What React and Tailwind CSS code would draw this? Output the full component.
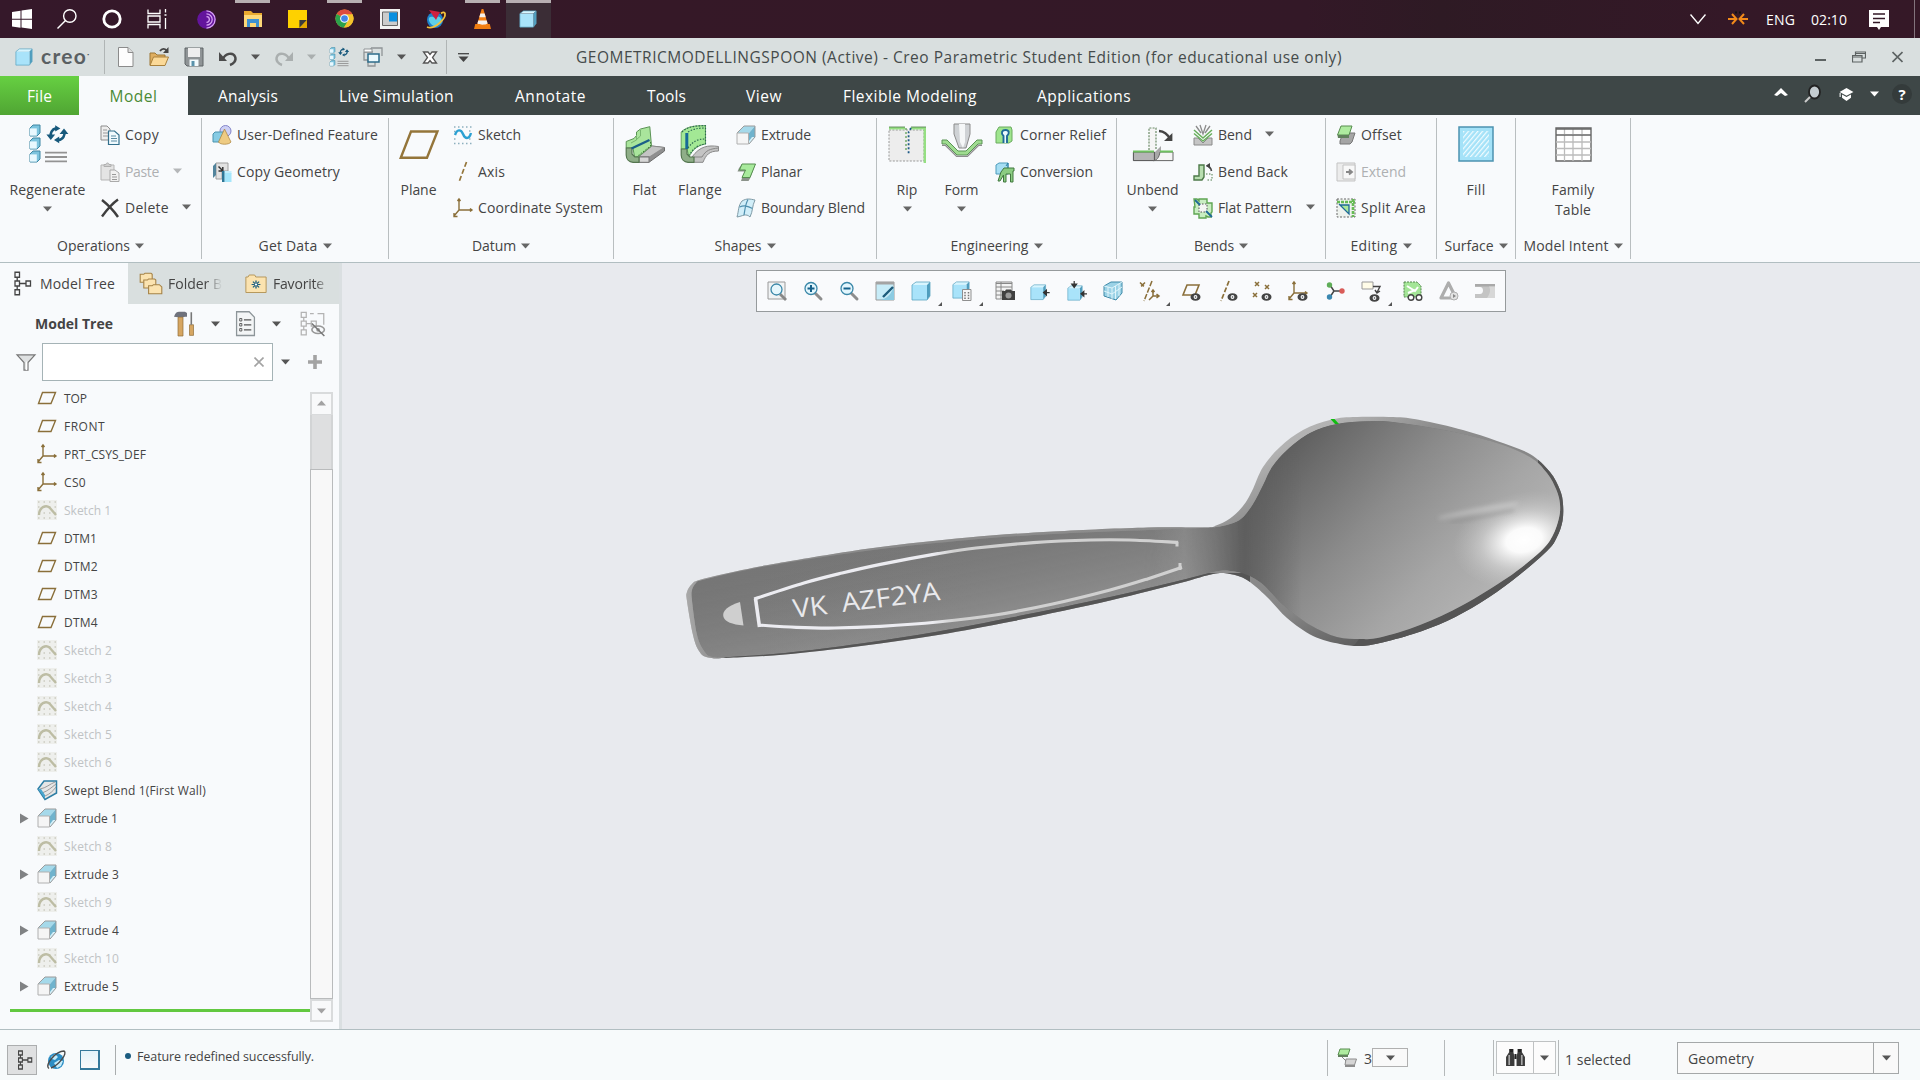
import React, { useLayoutEffect, useRef, useState } from "react";

/* Text run whose tracking is tuned so that it occupies exactly `w` pixels. */
function T({ w, c = "", children }) {
  const ref = useRef(null);
  const [ls, setLs] = useState(0);
  useLayoutEffect(() => {
    const natural = ref.current.getBoundingClientRect().width;
    setLs((w - natural) / String(children).length);
  }, [w, children]);
  return (
    <span ref={ref} style={{ letterSpacing: ls }} className={"inline-block shrink-0 whitespace-pre " + c}>
      {children}
    </span>
  );
}

function Tri({ c = "text-[#555]", up }) {
  return (
    <svg className={"h-[6px] w-[9px] shrink-0 " + c} viewBox="0 0 9 6" fill="currentColor">
      {up ? <path d="M0 5.5 4.5 0.5 9 5.5z" /> : <path d="M0 0.5h9L4.5 5.5z" />}
    </svg>
  );
}

const CUBE = (
  <g>
    <path d="M1 4 5 1h14l-3 3z" fill="#d9f5fe" />
    <path d="M16 4 19 1v14l-3 4z" fill="#4f9dbd" />
    <path d="M1 4h15v15H1z" fill="#a9e3fa" />
    <path d="M1 4 5 1h14v14l-3 4H1z" fill="none" stroke="#5ba5c2" strokeWidth="0.8" />
  </g>
);
const EYE = (
  <g>
    <ellipse cx="14.5" cy="16" rx="5" ry="3.8" fill="#444" />
    <circle cx="14.5" cy="16" r="1.9" fill="#f8fafc" />
    <circle cx="14.5" cy="16" r="0.8" fill="#444" />
  </g>
);
const MINI = (y) => (
  <g>
    <path d={`M1 ${y + 1.5}l1.5-1.5h3.5v4l-1.500 1.500H1z`} fill="#7cc4de" stroke="#3d86a3" strokeWidth=".5" />
    <path d={`M1 ${y + 1.7}h3.4v3.6H1z`} fill="#e8f8fe" />
  </g>
);
const AXES = <path d="M6 1v11h13M6 12l-5 6M4.5 3 6 1l1.500 2M17 10.500l2 1.500-2 1.500M1 15v3.500h3.500" fill="none" stroke="#8a6f3a" strokeWidth="1.400" />;
const LENS = (
  <g>
    <path d="M12.500 12.500l5.500 5.500" stroke="#8d8d8d" strokeWidth="3" strokeLinecap="round" />
    <circle cx="8" cy="7.500" r="6" fill="#e3f6fd" stroke="#3a87a8" strokeWidth="1.300" />
  </g>
);
const REGEN = (
  <g>
    {MINI(0.5)}
    {MINI(7)}
    {MINI(13.5)}
    <path d="M8.500 14.300h11M8.500 16.500h11M8.500 18.700h11" stroke="#939393" strokeWidth=".9" />
    <path d="M11.500 6.500A3.300 3.300 0 0 1 14 2.200M18 3.500A3.300 3.300 0 0 1 15.300 8" stroke="#17597c" strokeWidth="1.300" fill="none" />
    <path d="M9.200 5.300h4.400L11.400 8z M15.800 5h4.400L18 2.300z" fill="#17597c" />
    <path d="M13.600.6v3.200l2.600-1.600zM15.600 6.300v3.300L13 8z" fill="#17597c" />
  </g>
);
const EXTR = (
  <g>
    <path d="M1 8 8 1h11l-6 7z" fill="#a5d9ea" />
    <path d="M13 8l6-7v11l-6 7z" fill="#6fb3cd" />
    <path d="M13 19l6-7-3 0-3 4z" fill="#d4eff8" />
    <path d="M1 8 8 1h11v11l-6 7" fill="none" stroke="#9b9b9b" />
    <path d="M1 8h11.500v11H1z" fill="#f5f5f5" stroke="#b0b0b0" />
  </g>
);
const TREE = (
  <g fill="none" stroke="currentColor" strokeWidth="1.300">
    <path d="M3 1h4.500v4H3zM3 8h4.500v4H3zM3 15h4.500v4H3zM14 8h4.500v4H14zM5.200 5v3M5.200 12v3M7.500 10H14" />
  </g>
);

const ICONS = {
  cube: CUBE,
  extrude: EXTR,
  regen: REGEN,
  win: <path d="M0 3 8.500 1.700v8H0zM9.500 1.500 20 0v9.700H9.500zM0 10.700h8.500v8L0 17.500zM9.500 10.700H20V20L9.500 18.600z" fill="#fff" />,
  search: <g fill="none" stroke="#fff" strokeWidth="1.400"><circle cx="12.800" cy="7" r="6.200" /><path d="M8.500 11.500.5 19.500" /></g>,
  cortana: <circle cx="10" cy="10" r="8.200" fill="none" stroke="#fff" strokeWidth="2.800" />,
  task: <path d="M1 .5V4.500h12V.5M1 19.500V15.500h12v4M1 7h12v6H1zM18.500 0v3.500M18.500 9v11M17.500 6h2" fill="none" stroke="#fff" strokeWidth="1.300" />,
  tor: <g><circle cx="10" cy="10" r="9.800" fill="#63149c" /><path d="M10 1a9 9 0 0 1 0 18M10 4a6 6 0 0 1 0 12M10 7a3 3 0 0 1 0 6" fill="none" stroke="#d9a5f5" strokeWidth="1.300" /></g>,
  explorer: <g><path d="M1 2h7l2 2h9v14H1z" fill="#e9a92f" /><path d="M1 6h18v12H1z" fill="#fdd878" /><path d="M4 18v-8h12v8h-3v-4H7v4z" fill="#3f92d2" /></g>,
  sticky: <g><path d="M0 1h20v18H0z" fill="#fed100" /><path d="M12 19v-8h8z" fill="#3b3b3b" /><path d="M12 19l8-8v8z" fill="#e4a800" /></g>,
  chrome: <g><circle cx="10" cy="10" r="9.500" fill="#f5c32c" /><path d="M10 10 1.800 5.200A9.500 9.500 0 0 1 18.300 5.500z" fill="#dd4b3e" /><path d="M10 10 1.800 5.200A9.500 9.500 0 0 0 9.500 19.500L14 12z" fill="#2ba24c" /><path d="M10 5.500h8.300a9.500 9.500 0 0 1-8.800 14L14 12z" fill="#f5c32c" /><circle cx="10" cy="10" r="4.600" fill="#fff" /><circle cx="10" cy="10" r="3.500" fill="#4285e8" /></g>,
  panel: <g><path d="M0 0h20v20H0z" fill="#f2f2f2" /><path d="M2.500 3h15v13.500h-15z" fill="#ccc" stroke="#666" /><path d="M9 3.500h8v9H9z" fill="#0a8fe0" /></g>,
  globe: <g><circle cx="9" cy="11" r="8" fill="#1c83cf" /><path d="M3 9c3-3 6 1 8-1s5 2 5 4-5 6-8 5-6-5-5-8z" fill="#5fd0e8" /><path d="M3 1l11 2-4 8z" fill="#cf2040" /><path d="M1 18C8 21 20 10 19 4.500c-.5-2-3-1-4 0" fill="none" stroke="#f3c23c" strokeWidth="1.800" /></g>,
  vlc: <g><path d="M1.500 15h17l1.500 5H0z" fill="#f07d10" /><path d="M9 0h2l5.500 16c-3 2-10 2-13 0z" fill="#f47f13" /><path d="M7.500 4.500h5l1.300 3.700H6.200zM5 11.500h10l1 3c-3 1.600-9 1.600-12 0z" fill="#f4f0ec" /></g>,
  newdoc: <g><path d="M2.500.5h9.500l5 5V19.500H2.500z" fill="#fdfdfd" stroke="#8b8b8b" /><path d="M12 .5v5h5" fill="#ddd" stroke="#8b8b8b" /></g>,
  open: <g><path d="M1 18V6h5l2 2h8v4" fill="#dfae60" stroke="#9d7735" /><path d="M1 18.500 4.500 10H19.500l-3.500 8.500z" fill="#fbd998" stroke="#a9813c" /><path d="M11 4c2-3 5-2.500 6.500-.5" fill="none" stroke="#444" strokeWidth="1.800" /><path d="M19.500 0v6h-5.500z" fill="#444" /></g>,
  save: <g><path d="M1 1h18v18H3l-2-2z" fill="#8f9496" stroke="#5f6467" /><path d="M4 1h12v9H4z" fill="#eee" /><path d="M5.500 12.500h9V19h-9z" fill="#f3fbfd" /><path d="M7.500 14h3v5h-3z" fill="#5a93ab" /></g>,
  undo: <g><path d="M4.500 13C7 6 15 5 17 9.500S15 17 12 18" fill="none" stroke="#4b4b4b" strokeWidth="2.400" /><path d="M1 5l8 9H1z" fill="#4b4b4b" /></g>,
  redo: <g><path d="M15.500 13C13 6 5 5 3 9.500S5 17 8 18" fill="none" stroke="#aaafaf" strokeWidth="2.400" /><path d="M19 5l-8 9h8z" fill="#aaafaf" /></g>,
  windows: <g><path d="M8 1h11v8M8 1v4M1 5h9M1 5v8h5M8 19h3M5 13v6h7v-4" fill="none" stroke="#8f9496" strokeWidth="1.300" /><path d="M1 2h8v3H1z" fill="#fff" stroke="#8f9496" /><path d="M5 7h11v8H5z" fill="#ecfafe" stroke="#2c6c8b" strokeWidth="1.500" /></g>,
  closex: <path d="M3.500 5h4.500l2 2.500 2-2.500h4.500l-4 5.500 4 5.500h-4.500l-2-2.500-2 2.500H3.500l4-5.500z" fill="#fff" stroke="#555" strokeWidth="1.300" />,
  copy: <g><path d="M1 1h6l3 3v11H1z" fill="#eee" stroke="#8c8c8c" /><path d="M3 5h4M3 8h5M3 11h5" stroke="#999" /><path d="M8.500 6h6l4.500 4v9.500H8.500z" fill="#f0fafe" stroke="#33708d" strokeWidth="1.200" /><path d="M11 11h5M11 13.500h6M11 16h6" stroke="#5b8ba3" /></g>,
  paste: <g><path d="M1 3h13v15H1z" fill="#e4e4e4" stroke="#b5b5b5" /><path d="M4 4.500V2.500h2C6 .5 9 .5 9 2.500h2v2z" fill="#d0d0d0" stroke="#b0b0b0" /><path d="M10 8h5l4 3v8.500h-9z" fill="#f1f1f1" stroke="#aaa" /><path d="M12 12.500h4M12 15h5M12 17.500h5" stroke="#999" /></g>,
  del: <path d="M2 2C7 6 14 13 18 19M18 1.500C13 5 6 13 2 18.500" fill="none" stroke="#3e3e3e" strokeWidth="2.400" />,
  udf: <g><circle cx="13.500" cy="6" r="5.500" fill="#cdd0f5" stroke="#8485c9" /><path d="M1 9l2-2h9v7l-2 3H1z" fill="#86cbe4" stroke="#4a93ae" /><path d="M12.500 4 19 17c-2 3-11 3-12.500 0z" fill="#eecb83" stroke="#a97f36" strokeWidth=".7" /></g>,
  copygeo: <g><path d="M4 1h12v8h-6v8H4z" fill="#e2e2e2" stroke="#9e9e9e" /><path d="M1 4 4 1v12l-3 3z" fill="#52849c" /><path d="M6.500 4.500l4 4M10.800 5v4H6.500" stroke="#333" fill="none" strokeWidth="1.500" /><path d="M10 9h9.500v3H13v8h-3z" fill="#c5effc" /><path d="M13 11h6.500v9H13z" fill="#a5e6fb" /><path d="M10 9h2.500v11H10z" fill="#2e7696" /></g>,
  plane: <path d="M6 4h13.200L14 16.500H.9z" fill="none" stroke="#94753a" strokeWidth="1.200" />,
  treeplane: <path d="M5.500 4.500h13L14 15.500H1.500z" fill="none" stroke="#8a6f3a" strokeWidth="1.400" />,
  sketch: <g><path d="M1 2h18M1 18.500h18M1 6.500h3M1 14h3M16 6h3M16 14h3" stroke="#8db0be" strokeWidth="1.300" strokeDasharray="1.500 2.500" /><path d="M2 10C4 4 8 4 10 9s6 6 8-1" fill="none" stroke="#2ba0d2" strokeWidth="2.400" /></g>,
  axis: <path d="M13.500 0 6 20" stroke="#94753a" strokeWidth="1.700" strokeDasharray="5 2.500" />,
  csys: AXES,
  flat: (
    <g transform="scale(.5)" strokeLinejoin="round">
      <path d="M14 33 27 22 39.500 23.500V27L24 38.300H12z" fill="#8f8f8f" stroke="#6d6d6d" />
      <path d="M14 32.500 27 22l12 1.500L25 32.500z" fill="#c4c4c4" stroke="#888" strokeWidth=".7" />
      <path d="M14 33h10v5.300H14z" fill="#d6d6d6" stroke="#777" />
      <path d="M15.500 5 24.800 2.700 26.500 22 13.500 32.500 9.500 33 8 24H1.200v-6.500L9 14.500l2.500-3V8z" fill="#a9e59c" stroke="#5b9355" />
      <path d="M1.200 24H7v6l3 3h4v5.300H8C4 38 1.200 35 1.200 31z" fill="#8fae88" stroke="#54764f" strokeWidth="1.200" />
      <path d="M11.500 11v5L6 19M15.500 6v6L11 16" fill="none" stroke="#79b670" />
      <path d="M6.500 24.500 24.500 16" stroke="#1a5f88" strokeWidth="2.400" />
      <path d="M25.500 18v4L12 32.500" stroke="#3f7a3b" strokeDasharray="1.500 1.500" fill="none" />
    </g>
  ),
  flange: (
    <g transform="scale(.5)" strokeLinejoin="round">
      <path d="M12 33C20 22 28 21 38.500 22.500V27C29 27 26 31 23 38.300H12z" fill="#c4c4c4" stroke="#8a8a8a" />
      <path d="M14 33h8c4-7 8-8 16.500-9" fill="none" stroke="#888" />
      <path d="M1.200 8C7 2 17 1.500 25.500 1.700V20C18 21 12 26 9 33L7 25H1.200z" fill="#a3e895" stroke="#6aa863" />
      <path d="M1.200 25H7v5l3 3h4v5.300H8C4 38 1.200 35 1.200 31z" fill="#8fae88" stroke="#54764f" strokeWidth="1.200" />
      <path d="M6.800 9v16" stroke="#176a97" strokeWidth="3" />
      <path d="M2 8C8 2 17 1.700 25.500 1.700V20C17 21 13 25 9.500 31M8 24c5-7 10-9 17-9M8 8c5-3 10-4 17-4" fill="none" stroke="#2d6a52" strokeDasharray="1.500 1.500" strokeWidth="1.200" />
    </g>
  ),
  planar: <g><path d="M6 2h13.500L14 16.500l-1.500 2.500H5l1-3 3-6.500H1.500L3 6z" fill="#8b938a" /><path d="M6 2h13.500L14 15.500H6L9.500 8H3.500z" fill="#a8ea9c" stroke="#568f50" /></g>,
  blend: <g><path d="M6 3c5-3 8-2 13-1-3 6-2 11-5 17-4-4-7-1-13 0C3 12 2 8 6 3z" fill="#d1eef9" stroke="#7f9aa6" /><path d="M12 1.500C9 7 9 12 8 17M3.500 9c5-2 8-1 13 1.500" fill="none" stroke="#4e8fae" strokeWidth="1.200" /></g>,
  rip: <g><path d="M1 3h17.500v15.500H1z" fill="#ededed" stroke="#999" strokeDasharray="1 .7" strokeWidth=".5" /><path d="M1 1.500h8v1.300H1zM12 1.500h7.500V19.500h-1.200V2.800H12z" fill="#95df82" /><path d="M1 1.500h8M12 1.500h7.500" stroke="#4b7a48" strokeWidth=".4" /><path d="M12 2 10.800 4v11" fill="none" stroke="#1f5a86" strokeDasharray="1 1" strokeWidth=".9" /><path d="M9.500 2v12" stroke="#6aa55f" strokeDasharray="1 1" strokeWidth=".7" /></g>,
  form: <g><path d="M6 0h8v5L12 12H8.500L6 5z" fill="#cfd2d5" stroke="#8b8b8b" strokeWidth=".5" /><path d="M8.500 0h3v9L10.500 12 9 9z" fill="#f5f7f8" /><path d="M0 8h2.500L8 13.500h4L17.500 8H20v2h-2l-5.500 5.500h-5L2 10H0z" fill="#9fdc90" stroke="#5a9455" strokeWidth=".5" /><path d="M0 10.700h1.800l5.500 5.500h5.400l5.500-5.500H20" fill="none" stroke="#8d8d8d" strokeWidth=".7" /></g>,
  relief: <g><path d="M1 7l3-5h12l1 3v11l-3 2H1z" fill="#9fe58e" stroke="#6aab5f" /><path d="M8.500 18V11C5.500 8 7 5 10.500 5S15 8 12 11v7" fill="#e9f8fd" stroke="#1d6a97" strokeWidth="1.900" /></g>,
  conversion: <g><path d="M1 3 4 1h9v11H1z" fill="#a6def3" stroke="#4e9cbc" /><path d="M11 4l2-3v7" stroke="#2d7fa5" fill="none" /><path d="M6 10l3-4h10v3h-1v11h-2.500v-8H11v8H8.500v-7L5 19H3z" fill="#8bcc82" stroke="#41783f" /></g>,
  unbend: <g><path d="M0 14h11l3-3V15l-3 3.500H0z" fill="#a8a8a8" /><path d="M.2 14h10.500v4.300H.2z" fill="#b5b5b5" stroke="#555" strokeWidth=".5" /><path d="M10 18.300c2 0 3-1.500 3.500-4.300H20v4.300z" fill="#f5f5f5" stroke="#666" strokeWidth=".5" /><path d="M0 13.800h10.500M13.500 13.800H20" stroke="#6fc05f" strokeWidth="1" /><path d="M8 13V2h3.500v11" fill="#f5f5f5" stroke="#6a8a66" strokeDasharray="1 .6" strokeWidth=".6" /><path d="M13 3.500c3 .2 4.500 2 5.500 4" fill="none" stroke="#444" strokeWidth="1.200" /><path d="M15.500 8.500h4.200V4.500z" fill="#444" /></g>,
  bend: <g><path d="M1 13h4l5 5 5-5h4v7H1z" fill="#c5c5c5" stroke="#8a8a8a" /><path d="M1 5l9 8 9-8M1 8.500l9 7.500 9-7.500" fill="none" stroke="#67ae5b" strokeWidth="1.500" /><path d="M7 0l3 9 3-9M3 1l5 7M17 1l-5 7" fill="none" stroke="#8c8c8c" strokeWidth="1.300" /></g>,
  bendback: <g><path d="M6 3h5v12l-2 3H1v-4h5z" fill="#b8deb0" stroke="#4d7a49" strokeWidth="1.400" /><path d="M13 12h6v6h-6" fill="none" stroke="#4d7a49" strokeDasharray="1.500 1.500" /><path d="M18.500 9C18 6 16 4 13.500 4" fill="none" stroke="#444" strokeWidth="1.600" /><path d="M17 1v6l-4-3.500z" fill="#444" /></g>,
  pattern: <g><path d="M1 1h3l2 2V1h8v4h5v9l-1 1v4h-3l-2-1v2H6v-4H1V9h1z" fill="#c9eec2" stroke="#5fa553" strokeWidth="1.400" /><path d="M6 6h8v8H6z" fill="#f4f6f4" stroke="#555" strokeDasharray="1.500 1.500" /><path d="M2 2l5 5M13 13l6 6" stroke="#1f6a97" strokeWidth="1.800" /></g>,
  offset: <g><path d="M7 8h12l-3 9-2 2H4v-3z" fill="#a5a5a5" stroke="#777" /><path d="M5 1h11l-3 9H1.500z" fill="#aeeb9f" stroke="#588d50" /><path d="M1.500 10H13v3H2z" fill="#61805c" /></g>,
  extend: <g><path d="M1 1h18v18H1z" fill="#ececec" stroke="#c3c3c3" /><path d="M7 3h12v14H7z" fill="#f8f8f8" stroke="#c3c3c3" /><path d="M10 10h5M13 7.500l3 2.500-3 2.500" stroke="#888" strokeWidth="1.800" fill="none" /></g>,
  split: <g><path d="M1 1h18v18H1z" fill="#eef2ee" stroke="#666" strokeDasharray="2 1.500" /><path d="M1 4h18M17 1v18" stroke="#67bb55" strokeWidth="2.600" strokeDasharray="3 1" /><path d="M3 6l10 10V7h-9" fill="#a9e89a" stroke="#1f6a97" strokeWidth="1.300" /></g>,
  filter: <g><path d="M1 2h18l-7 8v8H8v-8z" fill="#dfe1e2" stroke="#777" strokeWidth="1.200" /><path d="M10.500 9v9" stroke="#fff" strokeWidth="1.400" /></g>,
  tree: TREE,
  folders: <g fill="#fbe3b0" stroke="#a58246" strokeWidth=".9"><path d="M1 9V2h3l1-1h5l1 1v7z" /><path d="M4 14V7h3l1-1h5l1 1v7z" /><path d="M8 19v-7h3l1-1h5l2 2v6z" /></g>,
  fav: <g><path d="M.8 18.500V3h2l1-2h5l1 2h9.400v15.500z" fill="#fbe3b0" stroke="#b39457" strokeWidth=".9" /><path d="M10 6.500v8M6 10.500h8M7.200 7.700l5.600 5.600M12.800 7.700l-5.600 5.600" stroke="#1d5f7f" strokeWidth="1.200" /><circle cx="10" cy="10.500" r="1.100" fill="#fff" /></g>,
  hammer: <g><path d="M0 4.500C1 1.500 3 .5 5 .5h6l2 1v3h-2L9 5H4z" fill="#6f727c" /><path d="M4 5h5V20H4z" fill="#d6a662" stroke="#8e6a33" strokeWidth=".6" /><path d="M15.500 11h4v8.500h-4z" fill="#d6a662" stroke="#8e6a33" strokeWidth=".6" /><path d="M17.300 1v10" stroke="#777" strokeWidth="1.600" /></g>,
  list: <g><path d="M1.500.5h12l5 4.500v14.500h-17z" fill="#f3f5f6" stroke="#8d9599" strokeWidth="1.200" /><path d="M8.500 7h7M8.500 11h7M8.500 15h7" stroke="#555" /><path d="M4.500 6h2v2h-2zM4.500 10h2v2h-2zM4.500 14h2v2h-2z" fill="none" stroke="#555" strokeWidth=".8" /></g>,
  hidetree: <g><g fill="none" stroke="#b3b3b3" strokeWidth="1"><path d="M1 1h4v4H1zM1 8h4v4H1zM1 15h4v4H1zM9 8h4v4H9zM3 5v3M3 12v3M5 10h4M8 2h3M14 2h5v9" /></g><ellipse cx="14.500" cy="15" rx="5" ry="3" fill="none" stroke="#999" strokeWidth="1.300" /><circle cx="14.500" cy="15" r="1.500" fill="#999" /><path d="M9.500 10l10 10" stroke="#777" strokeWidth="1.200" /></g>,
  sk: <g><path d="M0 0h20v20H0z" fill="#eeefec" /><path d="M1 2h18M1 7h18M1 13h18M1 18h18" stroke="#cbcbc0" strokeWidth="1.300" strokeDasharray="1.500 4" /><path d="M2 15C2 7 9 4.500 12.500 7.500L19 15" fill="none" stroke="#bdbda4" strokeWidth="2.400" /></g>,
  swept: <g><path d="M1 9 7 1h12.500v12L8 19.500z" fill="#e6e6e6" stroke="#2e7ea4" strokeWidth="1.500" /><path d="M3 9C9 8 13 4 18 2M5 13C11 11 15 7 19 4M8 16c5-2 8-5 11-9" fill="none" stroke="#9b9b9b" /><path d="M1 9l7 10v-4L4 9z" fill="#4aa6cf" /></g>,
  refit: <g><path d="M1 1h17v17H1z" fill="#f1f3f4" stroke="#9a9a9a" /><path d="M13 13l6 6" stroke="#888" strokeWidth="2.800" /><circle cx="9.500" cy="8.500" r="5.500" fill="#e6f7fd" stroke="#3a87a8" strokeWidth="1.300" /></g>,
  zin: <g>{LENS}<path d="M8 4v7M4.500 7.500h7" stroke="#15618b" strokeWidth="2" /></g>,
  zout: <g>{LENS}<path d="M4.500 7.500h7" stroke="#15618b" strokeWidth="2" /></g>,
  repaint: <g><path d="M1 1h18v18H1z" fill="#c7ecf8" stroke="#999" /><path d="M1 1h18v2.500H1z" fill="#a4a4a4" /><path d="M19 6v13H5c7-1 11-6 14-13z" fill="#8ccbe2" /><path d="M8 16 18 6" stroke="#1d5c7b" strokeWidth="2.400" /></g>,
  saved: <g><g transform="scale(.9)">{CUBE}</g><path d="M10.500 8.500h8.500v11h-8.500z" fill="#f5f5f5" stroke="#8f8f8f" /><path d="M13 11v7M16.500 11v7" stroke="#777" strokeDasharray="1.500 1.200" strokeWidth="1.500" /></g>,
  viewmgr: <g><path d="M1 1h16v17H1z" fill="#f3f3f3" stroke="#888" /><path d="M1 2.500h16M1 6h16M1 10h8M1 14h6M6 1v17" stroke="#888" /><path d="M7 10h3l1-1.500h5l1 1.500h3v9H7z" fill="#404040" /><circle cx="13.500" cy="14.500" r="3" fill="#999" /></g>,
  cubearrow: <g transform="translate(0 3) scale(.82)">{CUBE}<path d="M24 10.500h-5M20 7.500l-3.500 3 3.500 3z" stroke="#333" strokeWidth="1.500" fill="#333" /></g>,
  cubearrows: <g transform="translate(0 4) scale(.8)">{CUBE}<path d="M25 11h-5M21 8l-3.500 3 3.500 3zM9-5v6M6-1l3 4 3-4z" stroke="#333" strokeWidth="1.500" fill="#333" /></g>,
  persp: <g><path d="M1 5 8 1h11v11l-6 7-12-4z" fill="#9bd2e6" stroke="#3f8aa8" /><path d="M1 5l8 2v11M9 7l10-6M12.500 5v13M16 3v12M1 10l8 3 10-7M5 6v10" fill="none" stroke="#e8f8fd" strokeWidth=".9" /></g>,
  datumall: <g stroke="#8a6f3a" strokeWidth="1.500" fill="none"><path d="M1 1.500l5 5M6 1.500l-5 5M13 0 5 20" strokeDasharray="5.500 1.500" /><path d="M14 9v6h6M14 15l-4 4M17.500 13l2.500 2-2.500 2M12.500 11l1.500-2 1.500 2" /></g>,
  showplane: <g><path d="M6 4h12l-4 10H2z" fill="none" stroke="#8a6f3a" strokeWidth="1.600" />{EYE}</g>,
  showaxis: <g><path d="M11 0 3 20" stroke="#8a6f3a" strokeWidth="1.700" strokeDasharray="5 2" />{EYE}</g>,
  showpts: <g><path d="M3 1l4 4M7 1 3 5M13 4l4 4M17 4l-4 4M1 12l4 4M5 12l-4 4" stroke="#8a6f3a" strokeWidth="1.500" />{EYE}</g>,
  showcsys: <g>{AXES}{EYE}</g>,
  spin: <g><path d="M5 4l4 6-4 6M9 10h7" stroke="#444" strokeWidth="1.500" fill="none" /><circle cx="4.500" cy="4" r="2.700" fill="#5fad58" /><circle cx="4.500" cy="16" r="2.700" fill="#3a87b0" /><circle cx="17" cy="10" r="2.700" fill="#d95c58" /></g>,
  annot: <g><path d="M1 1h11v7H1z" fill="#fffce8" stroke="#9a9a9a" /><path d="M12 5.500h7l-3 6M14 9l2 3 3-2" stroke="#444" strokeWidth="1.400" fill="none" /><g transform="translate(-1 1)">{EYE}</g></g>,
  mesh: <g><path d="M1 1h13l4 4v11H1z" fill="#a4e597" stroke="#55874e" strokeDasharray="2 1" /><path d="M4 5l8 5 3-4M5 12l7-3" stroke="#fff" strokeWidth="2" fill="none" /><circle cx="8" cy="16.500" r="2.800" fill="#fff" stroke="#444" strokeWidth="1.400" /><circle cx="16" cy="16.500" r="2.800" fill="#fff" stroke="#444" strokeWidth="1.400" /></g>,
  warn: <g><path d="M9.500 2 17 17H2z" fill="none" stroke="#adadad" strokeWidth="3.200" strokeLinejoin="round" /><circle cx="15" cy="15" r="4" fill="#e2e2e2" stroke="#b0b0b0" /><path d="M14 13v4l3-2z" fill="#888" /></g>,
  grad: <g><path d="M0 3h20v14H0v-4h5c4 0 4-7 0-7H0z" fill="#c4c4c4" /><path d="M0 3h20v2.500H0z" fill="#a9a9a9" /><path d="M14 5.500h6V17h-8c3-4 4-8 2-11.500z" fill="#d7d7d7" /></g>,
  web: <g><circle cx="10" cy="11" r="8" fill="#2b8dc4" /><path d="M5 7l4-3 3 3-3 3-3-1zM8 13l5-3 4 1-2 5-4 2z" fill="#c4ecfb" /><path d="M3 18.500C-2 15 10 1 18 1c4 2-5 14-13 17" fill="none" stroke="#4a4a4a" strokeWidth="1.400" /></g>,
  layers: <g><path d="M3 1h10l-2 6H1z" fill="#aeeb9f" stroke="#588d50" /><path d="M1 7h10v2H1z" fill="#61805c" /><path d="M9 11h10.500l-2 6H8z" fill="#d5d5d5" stroke="#8d8d8d" /><path d="M8 17h10v2H8z" fill="#8d8d8d" /><path d="M5 9l4 4" stroke="#888" /></g>,
  binoc: <g><path d="M1 18V9l3-5h4l1 5v9zM11 18V9l1-5h4l3 5v9z" fill="#3b3b3b" /><path d="M4 1h4v3H4zM12 1h4v3h-4zM9 6h2v5H9z" fill="#222" /><path d="M4 7v10M16 7v10" stroke="#a7a7a7" strokeWidth="1.600" /></g>,
};

function Ico({ n, c = "h-5 w-5" }) {
  return (
    <svg viewBox="0 0 20 20" preserveAspectRatio="none" className={"shrink-0 overflow-visible " + c}>
      {ICONS[n]}
    </svg>
  );
}

function Taskbar() {
  const top = "flex h-full flex-col";
  return (
    <div className="flex h-[38px] items-center bg-[linear-gradient(90deg,#35182a_0%,#351827_35%,#331827_68%,#2e1a24_75%,#341827_90%,#351827_100%)] pl-3 text-white">
      <Ico n="win" />
      <Ico n="search" c="ml-[25px] h-5 w-5" />
      <Ico n="cortana" c="ml-[25px] h-5 w-5" />
      <Ico n="task" c="ml-[25px] h-5 w-5" />
      <Ico n="tor" c="ml-[30px] h-[19px] w-[19px]" />
      <div className={top + " ml-[19px] w-[35px] items-center"}>
        <div className="h-[3px] w-full bg-[#b7afb2]" />
        <Ico n="explorer" c="mt-[6px] h-5 w-5" />
      </div>
      <Ico n="sticky" c="ml-[18px] h-5 w-[19px]" />
      <div className={top + " ml-[20px] w-[35px] items-center"}>
        <div className="h-[3px] w-full bg-[#b7afb2]" />
        <Ico n="chrome" c="mt-[6px] h-[19px] w-[19px]" />
      </div>
      <Ico n="panel" c="ml-[18px] h-5 w-5" />
      <Ico n="globe" c="ml-[26px] h-5 w-5" />
      <div className={top + " ml-[19px] w-[35px] items-center"}>
        <div className="h-[3px] w-full bg-[#b7afb2]" />
        <Ico n="vlc" c="mt-[6px] h-5 w-[17px]" />
      </div>
      <div className={top + " ml-[6px] w-[45px] items-center bg-[#3b2d36]"}>
        <div className="h-[3px] w-full bg-[#b7afb2]" />
        <Ico n="cube" c="mt-[7px] mr-[2px] h-[18px] w-[18px]" />
      </div>
      <svg className="ml-auto h-3 w-4" viewBox="0 0 16 12" fill="none" stroke="#fff" strokeWidth="1.400"><path d="M.5 1.500 8 10.500l7.500-9" /></svg>
      <svg className="ml-[22px] h-4 w-5" viewBox="0 0 20 16" fill="none" stroke="#f28a1a" strokeWidth="2"><path d="M0 8h8.500M11.500 8H20M4 3l4.500 5L4 13M16 3l-4.500 5 4.500 5" /><path d="M7 1.500h2M11 1.500h2" stroke="#111" /></svg>
      <T w={29} c="ml-[18px] font-['Open_Sans'] text-[14px]">ENG</T>
      <T w={36} c="ml-[16px] font-['Open_Sans'] text-[14px]">02:10</T>
      <svg className="mt-px ml-[22px] h-5 w-5" viewBox="0 0 20 20"><path d="M0 0h20v17h-8l-2 3-2-3H0z" fill="#fff" /><path d="M4 4h12M4 8.500h12M4 12.500h7" stroke="#331827" strokeWidth="1.300" /></svg>
      <div className="ml-[25px] mr-[5px] h-full w-px bg-[#82737c]" />
    </div>
  );
}

function TitleBar() {
  return (
    <div className="flex h-[38px] items-center bg-[#d9dfdf] pl-[15px] text-[#454b4b]">
      <Ico n="cube" c="h-[18px] w-[18px]" />
      <T w={46} c="ml-2 -mt-[3px] font-['Lato'] text-[21px] leading-6 text-[#5a6063] font-bold">creo</T>
      <span className="-mt-1 w-1 text-[6px]">•</span>
      <div className="ml-[13px] h-[34px] w-px bg-[#b0b5b5]" />
      <Ico n="newdoc" c="ml-[11px] h-5 w-5" />
      <Ico n="open" c="ml-[13px] h-5 w-5" />
      <Ico n="save" c="ml-[15px] h-5 w-5" />
      <Ico n="undo" c="ml-[14px] h-5 w-5" />
      <span className="ml-[13px] flex"><Tri /></span>
      <Ico n="redo" c="ml-[14px] h-5 w-5" />
      <span className="ml-[13px] flex"><Tri c="text-[#aaafaf]" /></span>
      <Ico n="regen" c="ml-[13px] h-5 w-5" />
      <Ico n="windows" c="ml-[14px] h-5 w-5" />
      <span className="ml-[14px] flex"><Tri /></span>
      <Ico n="closex" c="ml-[14px] h-5 w-5" />
      <div className="ml-[6px] h-[34px] w-px bg-[#b0b5b5]" />
      <svg className="ml-[11px] h-[9px] w-[11px]" viewBox="0 0 11 9"><path d="M0 .7h11" stroke="#444" strokeWidth="1.300" /><path d="M.5 3.500h10L5.500 9z" fill="#444" /></svg>
      <T w={766} c="mt-px ml-[107px] font-['Open_Sans'] text-[15.5px]">GEOMETRICMODELLINGSPOON (Active) - Creo Parametric Student Edition (for educational use only)</T>
      <div className="mr-[17px] ml-auto flex items-center gap-[26px] text-[#5d6363]">
        <svg className="h-3 w-[11px]" viewBox="0 0 11 12"><path d="M0 9h11" stroke="currentColor" strokeWidth="2" /></svg>
        <svg className="h-3 w-[14px]" viewBox="0 0 14 12" fill="none" stroke="currentColor" strokeWidth="1.200"><path d="M3.500 4V1h10v6h-3M3.500 2.500h10M.5 4.500h9.500v6.500H.5zM.5 6H10" /></svg>
        <svg className="h-3 w-[11px]" viewBox="0 0 11 12" fill="none" stroke="currentColor" strokeWidth="1.700"><path d="M.5 1l10 10M10.500 1l-10 10" /></svg>
      </div>
    </div>
  );
}

const TABS = [
  ["Analysis", 60, "ml-[30px]"],
  ["Live Simulation", 115, "ml-[61px]"],
  ["Annotate", 71, "ml-[61px]"],
  ["Tools", 39, "ml-[61px]"],
  ["View", 36, "ml-[60px]"],
  ["Flexible Modeling", 134, "ml-[61px]"],
  ["Applications", 94, "ml-[60px]"],
];

function TabBar() {
  return (
    <div className="flex h-[39px] items-center bg-[#3e4747] font-['Open_Sans'] text-[15.5px] text-white">
      <div className="flex h-full w-[79px] items-center justify-center bg-linear-to-b from-[#66d042] to-[#50a533] pt-[2px]"><T w={25}>File</T></div>
      <div className="flex h-full w-[109px] items-center justify-center bg-[#f8fafc] pt-[2px] text-[#4a8a36]"><T w={48}>Model</T></div>
      {TABS.map(([t, w, m]) => <T key={t} w={w} c={"mt-[2px] " + m}>{t}</T>)}
      <div className="mr-2 -mt-[3px] ml-auto flex items-center">
        <svg className="-mt-[5px] h-2 w-[14px]" viewBox="0 0 14 8" fill="#fff"><path d="M0 7 7 0l7 7-3 1-4-3-4 3z" /></svg>
        <svg className="ml-4 h-5 w-[18px]" viewBox="0 0 18 20"><ellipse cx="10.500" cy="8" rx="5.500" ry="6.500" fill="#c4ccd0" stroke="#222" strokeWidth="1.800" /><path d="M6 13 1 18" stroke="#ccc" strokeWidth="2" /></svg>
        <svg className="ml-[17px] h-[13px] w-[15px]" viewBox="0 0 17 16" fill="#fff"><path d="M0 5 8.500 0 17 5 8.500 9.500z" /><path d="M3 8l5.500 3L14 8v4l-5.500 4L3 12zM0 6h1.300v5H0z" /></svg>
        <span className="ml-[16px] flex"><Tri c="text-white" /></span>
        <span className="ml-[13px] flex h-5 w-5 items-center justify-center rounded-full bg-[#343b3b] text-[15px] font-bold">?</span>
      </div>
    </div>
  );
}

/* ---------- ribbon ---------- */
function Small({ n, t, w, off, arrow }) {
  return (
    <div className={"flex h-[36.500px] items-center " + (off ? "text-[#aeb0b2]" : "")}>
      <Ico n={n} />
      <T w={w} c="ml-[5px]">{t}</T>
      {arrow && <span className={"flex -mt-[2px] " + arrow}><Tri c={off ? "text-[#b5b7b9]" : "text-[#666]"} /></span>}
    </div>
  );
}
function Big({ n, t, w, c, ic = "h-10 w-10", arrow, icon }) {
  return (
    <div className={"flex flex-col items-center " + c}>
      <div className="flex h-[52px] items-center justify-center">{icon || <Ico n={n} c={ic} />}</div>
      <T w={w} c="mt-[10px] h-[20px] leading-5">{t}</T>
      {arrow && <span className="mt-[6px] flex"><Tri c="text-[#666]" /></span>}
    </div>
  );
}
function Group({ c, label, lw, children }) {
  return (
    <div className={"flex shrink-0 flex-col border-r border-[#b9bec0] " + c}>
      <div className="flex h-[115px]">{children}</div>
      <div className="flex items-center justify-center gap-[5px] pt-[3px]"><T w={lw}>{label}</T><Tri c="text-[#666]" /></div>
    </div>
  );
}
const COL = "flex flex-col -mt-px ";

function Ribbon() {
  const grid = (
    <svg className="h-[35px] w-[37px]" viewBox="0 0 37 35"><path d="M1 1h35v33H1z" fill="#fff" stroke="#666" strokeWidth="1.400" /><path d="M9.500 8v26M18 8v26M27 8v26M1 15h35M1 21.500h35M1 28h35M9.500 2v5M18 2v5M27 2v5" stroke="#bcbcbc" strokeWidth="1.300" /><path d="M1 2h35M1 8h35" stroke="#666" strokeWidth="1.700" /></svg>
  );
  const fill = (
    <svg className="h-[36px] w-[36px]" viewBox="0 0 36 36"><defs><pattern id="hatch" width="3.600" height="3.600" patternUnits="userSpaceOnUse" patternTransform="rotate(40)"><path d="M0 0v4" stroke="#f2fcff" strokeWidth="2.400" /></pattern></defs><path d="M1 1h34v34H1z" fill="#a4e2f8" stroke="#4c93b0" strokeWidth="1.500" /><path d="M5 5h26v26H5z" fill="url(#hatch)" /></svg>
  );
  return (
    <div className="flex h-[148px] border-b border-[#b1bec1] bg-[#f8fafc] pt-[3px] pb-[3px] font-['Open_Sans'] text-[14px] leading-5 text-[#444]">
      <Group c="w-[202px]" label="Operations" lw={73}>
        <Big n="regen" t="Regenerate" w={76} c="ml-[9px] w-[77px]" arrow />
        <div className={COL + "ml-[14px]"}>
          <Small n="copy" t="Copy" w={34} />
          <Small n="paste" t="Paste" w={34} off arrow="ml-[14px]" />
          <Small n="del" t="Delete" w={44} arrow="ml-[13px]" />
        </div>
      </Group>
      <Group c="w-[187px]" label="Get Data" lw={59}>
        <div className={COL + "ml-[10px]"}>
          <Small n="udf" t="User-Defined Feature" w={141} />
          <Small n="copygeo" t="Copy Geometry" w={103} />
        </div>
      </Group>
      <Group c="w-[225px]" label="Datum" lw={44}>
        <Big n="plane" t="Plane" w={36} c="ml-[9px] w-[41px]" ic="h-[42px] w-[40px]" />
        <div className={COL + "ml-[14px]"}>
          <Small n="sketch" t="Sketch" w={43} />
          <Small n="axis" t="Axis" w={27} />
          <Small n="csys" t="Coordinate System" w={125} />
        </div>
      </Group>
      <Group c="w-[263px]" label="Shapes" lw={47}>
        <Big n="flat" t="Flat" w={24} c="ml-[9px] w-[43px]" />
        <Big n="flange" t="Flange" w={44} c="ml-[12px] w-[44px]" />
        <div className={COL + "ml-[14px]"}>
          <Small n="extrude" t="Extrude" w={50} />
          <Small n="planar" t="Planar" w={41} />
          <Small n="blend" t="Boundary Blend" w={104} />
        </div>
      </Group>
      <Group c="w-[240px]" label="Engineering" lw={78}>
        <Big n="rip" t="Rip" w={21} c="ml-[10px] w-[40px]" arrow />
        <Big n="form" t="Form" w={34} c="ml-[14px] w-[41px]" arrow />
        <div className={COL + "ml-[13px]"}>
          <Small n="relief" t="Corner Relief" w={86} />
          <Small n="conversion" t="Conversion" w={73} />
        </div>
      </Group>
      <Group c="w-[209px]" label="Bends" lw={40}>
        <Big n="unbend" t="Unbend" w={52} c="ml-[9px] w-[53px]" arrow />
        <div className={COL + "ml-[14px]"}>
          <Small n="bend" t="Bend" w={34} arrow="ml-[13px]" />
          <Small n="bendback" t="Bend Back" w={70} />
          <Small n="pattern" t="Flat Pattern" w={74} arrow="ml-[14px]" />
        </div>
      </Group>
      <Group c="w-[111px]" label="Editing" lw={47}>
        <div className={COL + "ml-[10px]"}>
          <Small n="offset" t="Offset" w={41} />
          <Small n="extend" t="Extend" w={45} off />
          <Small n="split" t="Split Area" w={65} />
        </div>
      </Group>
      <Group c="w-[79px]" label="Surface" lw={49}>
        <Big t="Fill" w={19} c="ml-[19px] w-[40px]" icon={fill} />
      </Group>
      <Group c="w-[115px]" label="Model Intent" lw={85}>
        <div className="ml-[30px] flex w-[54px] flex-col items-center">
          <div className="flex h-[52px] items-center">{grid}</div>
          <T w={43} c="mt-[10px]">Family</T>
          <T w={36}>Table</T>
        </div>
      </Group>
    </div>
  );
}

/* ---------- model tree ---------- */
const NODES = [
  ["treeplane", "TOP", 23], ["treeplane", "FRONT", 41], ["csys", "PRT_CSYS_DEF", 82], ["csys", "CS0", 22],
  ["sk", "Sketch 1", 47], ["treeplane", "DTM1", 33], ["treeplane", "DTM2", 34], ["treeplane", "DTM3", 34], ["treeplane", "DTM4", 34],
  ["sk", "Sketch 2", 48], ["sk", "Sketch 3", 48], ["sk", "Sketch 4", 48], ["sk", "Sketch 5", 48], ["sk", "Sketch 6", 48],
  ["swept", "Swept Blend 1(First Wall)", 142], ["extrude", "Extrude 1", 54, 1], ["sk", "Sketch 8", 48], ["extrude", "Extrude 3", 55, 1],
  ["sk", "Sketch 9", 48], ["extrude", "Extrude 4", 55, 1], ["sk", "Sketch 10", 55], ["extrude", "Extrude 5", 55, 1],
];

function Sidebar() {
  const fade = "overflow-hidden [mask-image:linear-gradient(to_right,black_70%,transparent_100%)]";
  return (
    <div className="flex w-[342px] shrink-0 flex-col border-r-[3px] border-[#dadfe1] bg-[#f8fafc] font-['Open_Sans'] text-[#444]">
      <div className="flex h-[41px] bg-[#d9dfdf] text-[14px]">
        <div className="flex w-[128px] items-center bg-[#f8fafc] pl-[12px]">
          <Ico n="tree" c="h-[25px] w-[20px]" />
          <T w={75} c="ml-[8px]">Model Tree</T>
        </div>
        <div className="flex w-[100px] items-center pl-[11px]">
          <Ico n="folders" c="h-[23px] w-[24px]" />
          <div className={"ml-[5px] w-[54px] " + fade}><T w={54}>Folder B</T></div>
        </div>
        <div className="flex items-center pl-[17px]">
          <Ico n="fav" c="h-[20px] w-[22px]" />
          <div className="ml-[6px] w-[52px] overflow-hidden [mask-image:linear-gradient(to_right,black_80%,transparent_110%)]"><T w={51}>Favorite</T></div>
        </div>
      </div>
      <div className="flex h-[39px] items-center pl-[35px]">
        <T w={78} c="text-[14px] font-bold">Model Tree</T>
        <Ico n="hammer" c="ml-[61px] h-[25px] w-[20px]" />
        <span className="ml-[17px] flex"><Tri /></span>
        <Ico n="list" c="ml-[15px] h-[25px] w-[21px]" />
        <span className="ml-[16px] flex"><Tri /></span>
        <Ico n="hidetree" c="ml-[19px] h-[25px] w-[25px]" />
      </div>
      <div className="flex h-[38px] items-center pl-[16px]">
        <Ico n="filter" c="h-[19px] w-[20px]" />
        <div className="ml-[6px] flex h-[38px] w-[231px] items-center justify-end border border-[#a5b3b6] bg-white pr-2">
          <svg className="h-[10px] w-[10px]" viewBox="0 0 10 10" stroke="#a3a3a3" strokeWidth="1.600"><path d="M.5.5l9 9M9.500.5l-9 9" /></svg>
        </div>
        <span className="ml-[8px] flex"><Tri /></span>
        <svg className="ml-[18px] h-[14px] w-[14px]" viewBox="0 0 14 14" stroke="#a3a3a3" strokeWidth="3.600"><path d="M7 0v14M0 7h14" /></svg>
      </div>
      <div className="mt-[11px] flex h-[630px]">
        <div className="flex w-[310px] flex-col text-[12px]">
          <div className="-mt-2 flex flex-col">
            {NODES.map(([n, t, w, exp]) => (
              <div key={t} className={"flex h-7 items-center pl-5 " + (n === "sk" ? "text-[#c0c3c5]" : "")}>
                <svg className="mt-px mr-[8px] h-[11px] w-[9px]" viewBox="0 0 10 11">{exp && <path d="M0 0l9.500 5.500L0 11z" fill="#808284" />}</svg>
                <Ico n={n} />
                <T w={w} c="mt-[2px] ml-[7px]">{t}</T>
              </div>
            ))}
          </div>
          <div className="mt-[9px] ml-[10px] h-[3px] w-[300px] bg-[#62c840]" />
        </div>
        <div className="flex w-[23px] flex-col">
          <div className="flex h-[23px] items-center justify-center border-2 border-b border-[#d9dbdc] bg-[#f8f9fa] pb-[2px]"><Tri up c="text-[#a2a2a2]" /></div>
          <div className="h-[54px] border-x-2 border-[#d2d4d5] bg-[#dedfe0]" />
          <div className="flex-1 border border-[#b9bbbc] bg-[#f8f8f8]" />
          <div className="flex h-[23px] items-center justify-center border-2 border-[#d9dbdc] bg-[#f8f9fa]"><Tri c="text-[#a2a2a2]" /></div>
        </div>
      </div>
    </div>
  );
}

/* ---------- graphics area ---------- */
const TOOLS = [
  ["refit", "ml-[10px]"], ["zin", "ml-[16px]"], ["zout", "ml-[16px]"], ["repaint", "ml-[16px]"], ["cube", "ml-[16px]", 1],
  ["saved", "ml-[21px]", 1], ["viewmgr", "ml-[23px]"], ["cubearrow", "ml-[15px]"], ["cubearrows", "ml-[17px]"], ["persp", "ml-[16px]"],
  ["datumall", "ml-[16px]", 1], ["showplane", "ml-[22px]"], ["showaxis", "ml-[17px]"], ["showpts", "ml-[14px]"], ["showcsys", "ml-[16px]"],
  ["spin", "ml-[17px]"], ["annot", "ml-[16px]", 1], ["mesh", "ml-[22px]"], ["warn", "ml-[16px]"], ["grad", "ml-[16px]"],
];

/* Smooth curve through a list of points (Catmull-Rom converted to Béziers). */
function curve(p, closed) {
  const n = p.length;
  const at = (i) => (closed ? p[(i + n) % n] : p[Math.max(0, Math.min(n - 1, i))]);
  let d = `M${p[0][0]} ${p[0][1]}`;
  for (let i = 0; i < (closed ? n : n - 1); i++) {
    const [a, b, c, e] = [at(i - 1), at(i), at(i + 1), at(i + 2)];
    d += `C${b[0] + (c[0] - a[0]) / 6} ${b[1] + (c[1] - a[1]) / 6} ${c[0] - (e[0] - b[0]) / 6} ${c[1] - (e[1] - b[1]) / 6} ${c[0]} ${c[1]}`;
  }
  return closed ? d + "Z" : d;
}

const OUTER = [
  [701, 579.5], [742, 570], [785, 562], [873, 548], [968, 537.5], [1053, 531.5], [1148, 527.5], [1206, 527.5], [1216, 525.5], [1230, 518.5], [1243, 506], [1252, 491],
  [1263, 467], [1280, 447], [1303, 430], [1330, 420], [1353, 417], [1393, 417], [1420, 420], [1463, 430], [1497, 441], [1530, 454], [1550, 472],
  [1560, 490], [1563, 504], [1562.5, 521], [1557, 537], [1547, 551], [1513, 580], [1480, 603], [1447, 621], [1413, 634], [1380, 643], [1360, 646],
  [1340, 644], [1313, 636], [1287, 618], [1267, 597], [1247, 580], [1230, 574], [1213, 574], [1180, 583], [1110, 600.5], [1014, 621], [938, 635],
  [861, 646], [785, 654.5], [730, 657.8], [708, 657.5], [699, 651], [693, 635], [687, 601], [687, 592], [692, 584],
];
const INNER = [
  [702, 580], [742, 571], [785, 563], [873, 550], [968, 540], [1053, 534], [1148, 530], [1200, 528], [1216, 527], [1230, 524], [1242, 518], [1253, 504],
  [1263, 485], [1272, 467], [1287, 450], [1310, 433], [1337, 424], [1367, 421.3], [1393, 422], [1447, 430.5], [1497, 443], [1530, 457], [1547, 473],
  [1556.5, 490], [1560, 504], [1559, 518], [1552.5, 536], [1540, 552], [1507, 578], [1463, 605], [1420, 625], [1380, 637.5], [1360, 639],
  [1337, 637], [1310, 625], [1283, 605], [1263, 584.5], [1247, 575], [1230, 571], [1216, 571.5], [1180, 580.5], [1110, 597], [1014, 617], [938, 631.5],
  [861, 643.5], [785, 653], [730, 657], [712, 657], [704, 651], [697, 635], [692, 601], [692, 590], [696, 583],
];

function Spoon() {
  const X = ([x, y]) => [670 + x / 2.6133 - 342, 500 + y / 3 - 263];
  const top = [[220, 297], [350, 249], [450, 219], [550, 193], [700, 161], [800, 144], [950, 128], [1100, 120], [1200, 120], [1328, 127]].map(X);
  const bot = [[230, 375], [330, 382], [430, 384], [550, 379], [700, 366], [850, 345], [1000, 312], [1150, 270], [1250, 236], [1338, 202]].map(X);
  const shift = (p) => p.map(([x, y]) => [x - 342, y - 263]);
  const inner = curve(shift(INNER), true);
  const outer = curve(shift(OUTER), true);
  return (
    <svg className="h-[766px] w-[1578px]" viewBox="0 0 1578 766">
      <defs>
        <linearGradient id="face" gradientUnits="userSpaceOnUse" x1="345" y1="300" x2="1210" y2="300">
          <stop offset="0" stopColor="#818181" /><stop offset=".35" stopColor="#828282" /><stop offset=".54" stopColor="#828282" />
          <stop offset=".575" stopColor="#8b8b8b" /><stop offset=".61" stopColor="#767676" /><stop offset=".645" stopColor="#5d5d5d" /><stop offset=".68" stopColor="#606060" /><stop offset="1" stopColor="#777" />
        </linearGradient>
        <linearGradient id="bowl" gradientUnits="userSpaceOnUse" x1="905" y1="185" x2="1110" y2="370">
          <stop offset="0" stopColor="#525252" /><stop offset=".22" stopColor="#6c6c6c" /><stop offset=".5" stopColor="#8b8b8b" /><stop offset=".8" stopColor="#a6a6a6" /><stop offset="1" stopColor="#b2b2b2" />
        </linearGradient>
        <linearGradient id="bowlmask" gradientUnits="userSpaceOnUse" x1="895" y1="0" x2="960" y2="0">
          <stop offset="0" stopColor="#000" /><stop offset="1" stopColor="#fff" />
        </linearGradient>
        <mask id="bm" maskUnits="userSpaceOnUse" x="0" y="0" width="1578" height="766"><path d="M0 0h1578v766H0z" fill="url(#bowlmask)" /></mask>
        <linearGradient id="shade" gradientUnits="userSpaceOnUse" x1="600" y1="275" x2="622" y2="385">
          <stop offset="0" stopColor="#000" stopOpacity=".08" /><stop offset="1" stopColor="#fff" stopOpacity=".16" />
        </linearGradient>
        <linearGradient id="fadeR" gradientUnits="userSpaceOnUse" x1="800" y1="0" x2="900" y2="0">
          <stop offset="0" stopColor="#fff" /><stop offset="1" stopColor="#000" />
        </linearGradient>
        <mask id="hm" maskUnits="userSpaceOnUse" x="0" y="0" width="1578" height="766"><path d="M0 0h1578v766H0z" fill="url(#fadeR)" /></mask>
        <radialGradient id="shine" gradientUnits="userSpaceOnUse" cx="0" cy="0" r="1" gradientTransform="translate(1182 277) rotate(-12) scale(72 48)">
          <stop offset="0" stopColor="#fff" /><stop offset=".25" stopColor="#fff" stopOpacity=".95" /><stop offset=".6" stopColor="#eee" stopOpacity=".38" /><stop offset="1" stopColor="#ccc" stopOpacity="0" />
        </radialGradient>
        <linearGradient id="rim" gradientUnits="userSpaceOnUse" x1="870" y1="140" x2="1010" y2="400">
          <stop offset="0" stopColor="#bcbcbc" /><stop offset=".25" stopColor="#b2b2b2" /><stop offset=".42" stopColor="#8e8e8e" /><stop offset=".75" stopColor="#858585" /><stop offset="1" stopColor="#565656" />
        </linearGradient>
        <linearGradient id="rimTop" gradientUnits="userSpaceOnUse" x1="345" y1="0" x2="880" y2="0">
          <stop offset="0" stopColor="#a8a8a8" /><stop offset=".03" stopColor="#999" /><stop offset=".08" stopColor="#8a8a8a" /><stop offset="1" stopColor="#8c8c8c" />
        </linearGradient>
        <linearGradient id="groove" gradientUnits="userSpaceOnUse" x1="590" y1="0" x2="612" y2="0"><stop offset="0" stopColor="#ececf1" /><stop offset="1" stopColor="#d0d0d0" /></linearGradient>
        <clipPath id="inner"><path d={inner} /></clipPath>
        <clipPath id="edgeR"><path d="M1196 180h60v230H990l40-50 166-90z" /></clipPath>
        <clipPath id="edgeT"><path d="M340 250h532v20L640 310 366 400h-26z" /></clipPath>
        <clipPath id="edgeH"><path d="M372 385 640 310h268v110H366z" /></clipPath>
        <filter id="soft"><feGaussianBlur stdDeviation="2" /></filter>
      </defs>
      <path d={outer} fill="url(#rim)" />
      <path d={outer} fill="#555" clipPath="url(#edgeR)" />
      <path d={outer} fill="#555" clipPath="url(#edgeH)" />
      <path d={outer} fill="url(#rimTop)" clipPath="url(#edgeT)" />
      <g clipPath="url(#inner)">
        <path d={inner} fill="url(#face)" />
        <path d="M345 250h560v170H345z" fill="url(#shade)" mask="url(#hm)" />
        <path d="M880 140h350v260H880z" fill="url(#bowl)" mask="url(#bm)" />
        <ellipse cx="1182" cy="277" rx="74" ry="52" fill="url(#shine)" />
        <g filter="url(#soft)">
          <path d="M1097 254C1120 248 1150 241 1177 239L1174 243C1150 248 1120 252 1097 256z" fill="#cfcfcf" opacity=".6" />
          <path d="M1108 259C1130 256 1155 250 1172 247" stroke="#888" strokeWidth="3" fill="none" opacity=".45" />
        </g>
      </g>
      <g fill="none" stroke="url(#groove)" strokeWidth="3.200">
        <path d={curve(top)} />
        <path d={curve(bot)} />
      </g>
      <path d="M413.500 335.500 417.500 364" stroke="#ececf1" strokeWidth="3.600" />
      <path d="M835 279v4.500M838 300v7" stroke="#d0d0d0" strokeWidth="3" />
      <path d="M398 339Q379 345 381.500 354 384 361 401.500 362.500z" fill="#cfcfcf" />
      <text x="452" y="355" transform="rotate(-7 452 355)" textLength="148" lengthAdjust="spacingAndGlyphs" className="fill-[#e9e9ec] font-['Open_Sans'] text-[26px] whitespace-pre">VK  AZF2YA</text>
      <path d="M988.500 156h4l4.500 5h-4z" fill="#10bd10" />
    </svg>
  );
}

function Canvas() {
  return (
    <div className="relative flex-1 bg-[#e8eaee]">
      <Spoon />
      <div className="absolute top-[7px] left-[414px] flex h-[42px] w-[750px] items-center border border-[#969a9c] bg-[#f9fafc]">
        {TOOLS.map(([n, m, menu]) => (
          <div key={n} className={"relative h-5 w-5 shrink-0 " + m}>
            <Ico n={n} />
            {menu && <svg className="absolute top-[21px] left-[27px] h-1 w-1" viewBox="0 0 4 4"><path d="M4 0v4H0z" fill="#555" /></svg>}
          </div>
        ))}
      </div>
    </div>
  );
}

function StatusBar() {
  return (
    <div className="flex h-[51px] items-center border-t border-[#b1bec1] bg-[#f7fafb] pt-[10px] pl-[7px] font-['Open_Sans'] text-[#444]">
      <div className="flex h-[30px] w-[30px] items-center justify-center border border-[#acaeaf] bg-[#dfe0e1] pl-1"><Ico n="tree" c="h-[20px] w-[17px]" /></div>
      <Ico n="web" c="ml-[9px] h-5 w-5" />
      <div className="ml-[14px] h-5 w-5 border-2 border-t border-l border-[#35799b] bg-linear-to-b from-[#e2f3fa] to-[#fafafa]" />
      <div className="ml-[15px] h-[30px] w-px bg-[#a9adae]" />
      <div className="mb-[8px] ml-[9px] h-[6px] w-[6px] rounded-full bg-[#1b5c80]" />
      <T w={177} c="-mt-[5px] ml-[6px] text-[12.500px]">Feature redefined successfully.</T>
      <div className="-mt-[5px] mr-[21px] ml-auto flex h-[36px] items-center text-[14px]">
        <div className="h-full w-px bg-[#b5b9ba]" />
        <Ico n="layers" c="ml-[9px] h-5 w-5" />
        <T w={8} c="mt-[2px] ml-[7px]">3</T>
        <div className="flex h-[19px] w-[36px] items-center justify-center border border-[#b0b0b0] bg-[#f9f9f9]"><Tri /></div>
        <div className="ml-[36px] h-full w-px bg-[#b5b9ba]" />
        <div className="ml-[48px] h-full w-px bg-[#b5b9ba]" />
        <div className="ml-[2px] flex h-[33px] w-[60px] border border-[#bfc2c3] bg-[#fcfcfc]">
          <div className="flex w-[37px] items-center justify-center border-r border-[#bfc2c3]"><Ico n="binoc" c="h-[20px] w-[21px]" /></div>
          <div className="flex flex-1 items-center justify-center"><Tri /></div>
        </div>
        <div className="ml-[2px] h-full w-px bg-[#b5b9ba]" />
        <T w={66} c="mt-[3px] ml-[6px]">1 selected</T>
        <div className="ml-[46px] flex h-[32px] w-[222px] border border-[#a5a8a9] bg-[#f9f9f9]">
          <div className="flex flex-1 items-center border-r border-[#a5a8a9] pt-[2px] pl-[10px]"><T w={66}>Geometry</T></div>
          <div className="flex w-[24px] items-center justify-center"><Tri /></div>
        </div>
      </div>
    </div>
  );
}

export default function App() {
  return (
    <div className="flex h-[1080px] w-[1920px] flex-col overflow-hidden bg-[#f8fafc]">
      <Taskbar />
      <TitleBar />
      <TabBar />
      <Ribbon />
      <div className="flex min-h-0 flex-1">
        <Sidebar />
        <Canvas />
      </div>
      <StatusBar />
    </div>
  );
}
